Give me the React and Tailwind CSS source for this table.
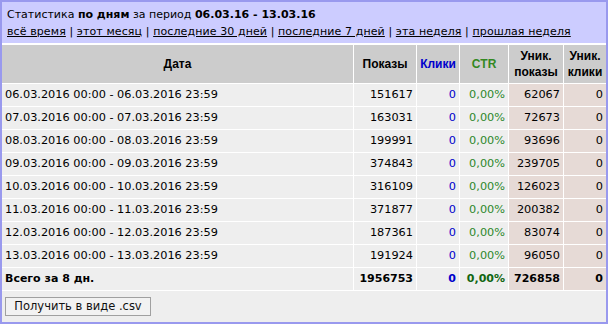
const rows = [
  ['06.03.2016 00:00 - 06.03.2016 23:59', '151617', '62067'],
  ['07.03.2016 00:00 - 07.03.2016 23:59', '163031', '72673'],
  ['08.03.2016 00:00 - 08.03.2016 23:59', '199991', '93696'],
  ['09.03.2016 00:00 - 09.03.2016 23:59', '374843', '239705'],
  ['10.03.2016 00:00 - 10.03.2016 23:59', '316109', '126023'],
  ['11.03.2016 00:00 - 11.03.2016 23:59', '371877', '200382'],
  ['12.03.2016 00:00 - 12.03.2016 23:59', '187361', '83074'],
  ['13.03.2016 00:00 - 13.03.2016 23:59', '191924', '96050'],
];

const links = ['всё время', 'этот месяц', 'последние 30 дней', 'последние 7 дней', 'эта неделя', 'прошлая неделя'];

const head = "bg-[#cccccc] h-[38px] flex items-center justify-center text-center font-['Liberation_Sans',Arial,sans-serif] font-bold text-[12px] leading-[16px]";
const cell = 'h-[22px] flex items-center justify-end pr-[3px]';

export default function App() {
  return (
    <div className="w-[608px] h-[324px] border-2 border-[#9999ee] bg-[#eeeeee] flex flex-col font-['DejaVu_Sans',Verdana,sans-serif] text-[11px] text-black">
      <div className="h-[41px] bg-[#ccccff] px-[5px] pt-[4px] leading-[17px] whitespace-nowrap">
        <div>
          Статистика <b>по дням</b> за период <b>06.03.16 - 13.03.16</b>
        </div>
        <div className="tracking-[0.1px]">
          {links.map((l, i) => (
            <span key={l}>
              {i > 0 && ' | '}
              <a className="underline cursor-pointer">{l}</a>
            </span>
          ))}
        </div>
      </div>

      <div className="grid grid-cols-[351px_62px_42px_48px_54px_42px] gap-px bg-white border-t-2 border-b border-white text-[11.3px]">
        <div className={head}>Дата</div>
        <div className={head}>Показы</div>
        <div className={head + ' text-[#0000cc]'}>Клики</div>
        <div className={head + ' text-[#338822]'}>CTR</div>
        <div className={head}>Уник.<br />показы</div>
        <div className={head}>Уник.<br />клики</div>

        {rows.map(r => (
          <div key={r[0]} className="contents">
            <div className="h-[22px] flex items-center pl-[3px] bg-[#eeeeee]">{r[0]}</div>
            <div className={cell + ' bg-[#eeeeee]'}>{r[1]}</div>
            <div className={cell + ' bg-[#eeeeee] text-[#0000cc]'}>0</div>
            <div className={cell + ' bg-[#eeeeee] text-[#2d882d]'}>0,00%</div>
            <div className={cell + ' bg-[#e6dad6]'}>{r[2]}</div>
            <div className={cell + ' bg-[#e6dad6]'}>0</div>
          </div>
        ))}

        <div className="h-[22px] flex items-center pl-[3px] bg-[#eeeeee] font-bold text-[11px]">Всего за 8 дн.</div>
        <div className={cell + ' bg-[#eeeeee] font-bold text-[11px]'}>1956753</div>
        <div className={cell + ' bg-[#eeeeee] font-bold text-[11px] text-[#0000cc]'}>0</div>
        <div className={cell + ' bg-[#eeeeee] font-bold text-[11px] text-[#116611]'}>0,00%</div>
        <div className={cell + ' bg-[#e6dad6] font-bold text-[11px]'}>726858</div>
        <div className={cell + ' bg-[#e6dad6] font-bold text-[11px]'}>0</div>
      </div>

      <div className="flex-1 bg-[#eeeeee]">
        <button className="mt-[6px] ml-[3px] h-[19px] w-[146px] border border-[#a0a0a0] bg-[#f2f2f2] text-[11.5px] leading-none text-[#111]">
          Получить в виде .csv
        </button>
      </div>
    </div>
  );
}
